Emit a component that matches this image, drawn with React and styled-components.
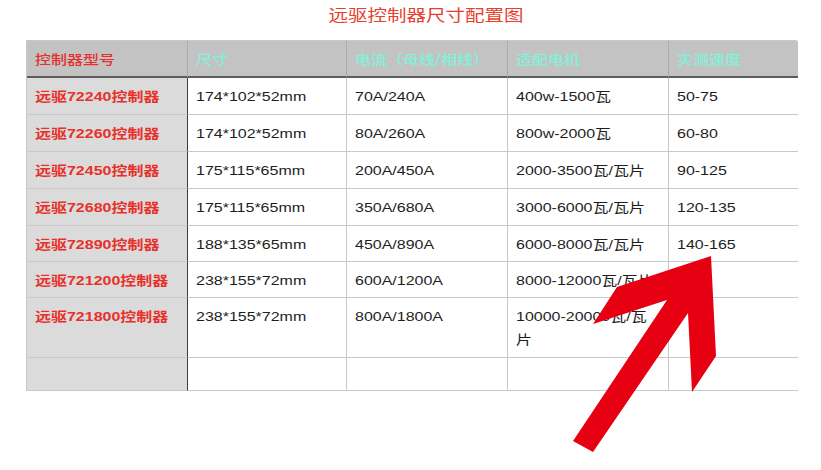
import React from "react";
import styled, { createGlobalStyle } from "styled-components";

const Global = createGlobalStyle`
  html, body { margin: 0; padding: 0; background: #ffffff; }
  body { font-family: "Liberation Sans", "Noto Sans CJK SC", sans-serif; }
`;

const Page = styled.div`
  position: relative;
  width: 821px;
  height: 470px;
  overflow: hidden;
  background: #fff;
`;

const Title = styled.div`
  height: 28px;
  line-height: 28px;
  padding-left: 32px;
  text-align: center;
  font-family: "Noto Sans CJK SC", sans-serif;
  font-size: 16px;
  color: #e8402e;
  & > span {
    display: inline-block;
    transform: scaleX(1.22);
    transform-origin: center center;
  }
`;

const Table = styled.div`
  margin: 12px 0 0 26px;
  width: 771px;
  display: grid;
  grid-template-columns: 161px 159px 161px 161px 129px;
  grid-template-rows: 37px 37px 37px 37px 37px 36px 36px 60px 33px;
  border-top: 1px solid #c9c9c9;
  border-left: 1px solid #c9c9c9;
  box-sizing: border-box;
`;

const Cell = styled.div`
  box-sizing: border-box;
  padding: ${(p) => (p.$head ? "0 8px" : "7px 8px 0")};
  display: flex;
  align-items: ${(p) => (p.$head ? "center" : "flex-start")};
  background: ${(p) => (p.$head ? "#c3c3c3" : p.$first ? "#dbdbdb" : "#ffffff")};
  border-right: 1px solid
    ${(p) => (p.$first && !p.$head ? "#3e3e3e" : p.$head ? "#ababab" : "#c9c9c9")};
  border-bottom: ${(p) => (p.$head ? "2px solid #5c5c5c" : "1px solid #c9c9c9")};
  border-right-width: ${(p) => (p.$last ? "0" : "1px")};
  overflow: visible;
`;

const Text = styled.span`
  display: inline-block;
  transform: scaleX(1.23);
  transform-origin: left center;
  white-space: pre;
  font-family: ${(p) =>
    p.$kind === "model" || p.$kind === "headRed" || p.$kind === "head"
      ? '"Noto Sans CJK SC", sans-serif'
      : '"Liberation Sans", "Noto Sans CJK SC", sans-serif'};
  font-size: 13px;
  line-height: 23px;
  font-weight: ${(p) => (p.$kind === "model" ? 700 : p.$kind === "body" ? 400 : 500)};
  color: ${(p) =>
    p.$kind === "model" || p.$kind === "headRed"
      ? "#e8302a"
      : p.$kind === "head"
      ? "#80f2da"
      : "#1e1e1e"};
`;

const ModelText = styled(Text)`
  font-family: "Liberation Sans", "Noto Sans CJK SC", sans-serif;
`;

const Arrow = styled.svg`
  position: absolute;
  left: 0;
  top: 0;
  pointer-events: none;
`;

const headers = ["控制器型号", "尺寸", "电流（母线/相线）", "适配电机", "实测速度"];

const rows = [
  ["远驱72240控制器", "174*102*52mm", "70A/240A", "400w-1500瓦", "50-75"],
  ["远驱72260控制器", "174*102*52mm", "80A/260A", "800w-2000瓦", "60-80"],
  ["远驱72450控制器", "175*115*65mm", "200A/450A", "2000-3500瓦/瓦片", "90-125"],
  ["远驱72680控制器", "175*115*65mm", "350A/680A", "3000-6000瓦/瓦片", "120-135"],
  ["远驱72890控制器", "188*135*65mm", "450A/890A", "6000-8000瓦/瓦片", "140-165"],
  ["远驱721200控制器", "238*155*72mm", "600A/1200A", "8000-12000瓦/瓦片", ""],
  ["远驱721800控制器", "238*155*72mm", "800A/1800A", "10000-20000瓦/瓦\n片", ""],
  ["", "", "", "", ""],
];

export default function App() {
  return (
    <Page>
      <Global />
      <Title>
        <span>远驱控制器尺寸配置图</span>
      </Title>
      <Table>
        {headers.map((h, i) => (
          <Cell key={"h" + i} $head $first={i === 0} $last={i === 4}>
            <Text $kind={i === 0 ? "headRed" : "head"}>{h}</Text>
          </Cell>
        ))}
        {rows.map((r, ri) =>
          r.map((c, ci) => (
            <Cell key={ri + "-" + ci} $first={ci === 0} $last={ci === 4}>
              {ci === 0 ? (
                <ModelText $kind="model">{c}</ModelText>
              ) : (
                <Text $kind="body">{c}</Text>
              )}
            </Cell>
          ))
        )}
      </Table>
      <Arrow width="821" height="470" viewBox="0 0 821 470">
        <polygon
          points="711,256 617,287 593,324 667,300 573,441 593,452 688,313 692,392 716,356"
          fill="#e60012"
        />
      </Arrow>
    </Page>
  );
}
